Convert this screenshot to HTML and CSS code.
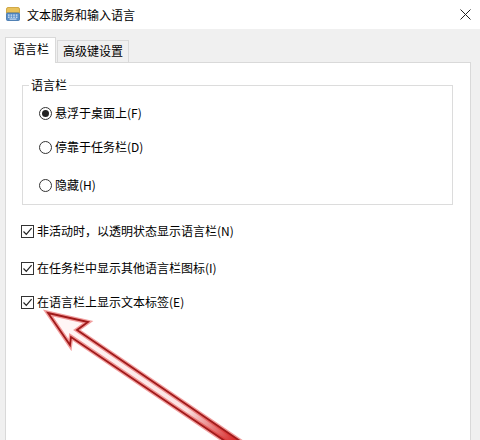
FILE: index.html
```html
<!DOCTYPE html>
<html lang="zh-CN">
<head>
<meta charset="utf-8">
<title>文本服务和输入语言</title>
<link rel="stylesheet" href="styles.css">
</head>
<body>
<div class="window">
  <div class="titlebar">
    <svg class="app-icon" width="14" height="16" viewBox="0 0 14 16">
      <path d="M2 1.5 h10 a1.5 1.5 0 0 1 1.5 1.5 v4 h-13 v-4 a1.5 1.5 0 0 1 1.5 -1.5z" fill="#e8c15a" stroke="#c89a2e" stroke-width="0.8"/>
      <rect x="0.5" y="7" width="13" height="7.5" rx="1" fill="#5a8fc8" stroke="#3a6ea8" stroke-width="0.8"/>
      <g fill="#dfeaf7">
        <rect x="2" y="8.5" width="1.6" height="1.2"/><rect x="4.6" y="8.5" width="1.6" height="1.2"/><rect x="7.2" y="8.5" width="1.6" height="1.2"/><rect x="9.8" y="8.5" width="1.6" height="1.2"/>
        <rect x="2" y="10.6" width="1.6" height="1.2"/><rect x="4.6" y="10.6" width="1.6" height="1.2"/><rect x="7.2" y="10.6" width="1.6" height="1.2"/><rect x="9.8" y="10.6" width="1.6" height="1.2"/>
        <rect x="3.5" y="12.6" width="7" height="1"/>
      </g>
    </svg>
    <span class="title">文本服务和输入语言</span>
    <svg class="close" width="11" height="11" viewBox="0 0 11 11">
      <path d="M0.5 0.5 L10.5 10.5 M10.5 0.5 L0.5 10.5" stroke="#222" stroke-width="1"/>
    </svg>
  </div>
  <div class="client">
    <div class="tabs">
      <div class="tab tab-active">语言栏</div>
      <div class="tab">高级键设置</div>
    </div>
    <div class="panel">
      <fieldset class="group">
        <legend class="group-title">语言栏</legend>
        <div class="opt opt-1"><span class="radio radio-on"></span><span class="label">悬浮于桌面上(F)</span></div>
        <div class="opt opt-2"><span class="radio"></span><span class="label">停靠于任务栏(D)</span></div>
        <div class="opt opt-3"><span class="radio"></span><span class="label">隐藏(H)</span></div>
      </fieldset>
      <div class="check check-1"><span class="box"><svg width="11" height="11" viewBox="0 0 11 11"><path d="M1.5 5.5 L4.3 8.3 L9.6 2.2" fill="none" stroke="#222" stroke-width="1.2"/></svg></span><span class="label">非活动时，以透明状态显示语言栏(N)</span></div>
      <div class="check check-2"><span class="box"><svg width="11" height="11" viewBox="0 0 11 11"><path d="M1.5 5.5 L4.3 8.3 L9.6 2.2" fill="none" stroke="#222" stroke-width="1.2"/></svg></span><span class="label">在任务栏中显示其他语言栏图标(I)</span></div>
      <div class="check check-3"><span class="box"><svg width="11" height="11" viewBox="0 0 11 11"><path d="M1.5 5.5 L4.3 8.3 L9.6 2.2" fill="none" stroke="#222" stroke-width="1.2"/></svg></span><span class="label">在语言栏上显示文本标签(E)</span></div>
    </div>
  </div>
  <svg class="arrow" width="480" height="440" viewBox="0 0 480 440">
    <defs>
      <linearGradient id="shaftfill" gradientUnits="userSpaceOnUse" x1="70" y1="330" x2="240" y2="440">
        <stop offset="0" stop-color="#fff6f6"/>
        <stop offset="0.7" stop-color="#fbe3e3"/>
        <stop offset="1" stop-color="#d42020"/>
      </linearGradient>
    </defs>
    <polygon points="48,313 88,322 77,330 268,460 256,462 71,337 70,345" fill="url(#shaftfill)" stroke="rgba(225,40,40,0.45)" stroke-width="4.5" stroke-linejoin="miter"/>
    <polygon points="48,313 88,322 77,330 268,460 256,462 71,337 70,345" fill="none" stroke="#a01a1a" stroke-width="1.8" stroke-linejoin="miter"/>
  </svg>
</div>
</body>
</html>
```

FILE: styles.css
```css
* { box-sizing: border-box; }
html, body { margin: 0; padding: 0; }
body {
  width: 480px;
  height: 440px;
  overflow: hidden;
  font-family: "Noto Sans CJK SC", "Noto Sans", sans-serif;
  font-size: 12px;
  color: #000;
  background: #f0f0f0;
}
.window {
  position: relative;
  width: 480px;
  height: 440px;
  overflow: hidden;
}
.titlebar {
  height: 29px;
  background: #fff;
  display: flex;
  align-items: center;
  padding-left: 6px;
}
.app-icon { flex: none; margin-top: -1px; }
.title {
  margin-left: 7px;
  line-height: 16px;
  font-size: 12px;
}
.close { margin-left: auto; margin-right: 9px; }
.client {
  background: #f0f0f0;
  padding-top: 8px;
  height: 411px;
}
.tabs {
  display: flex;
  align-items: flex-end;
  margin-left: 5px;
  position: relative;
  z-index: 1;
}
.tab {
  height: 22px;
  padding: 0 5px;
  line-height: 20px;
  border: 1px solid #d9d9d9;
  border-bottom: none;
  background: #f0f0f0;
  margin-left: 1px;
}
.tab-active {
  height: 26px;
  margin-left: 0;
  margin-bottom: -1px;
  background: #fff;
  padding: 0 6px 0 7px;
  line-height: 22px;
}
.panel {
  margin-left: 5px;
  width: 466px;
  height: 400px;
  background: #fff;
  border: 1px solid #d9d9d9;
  padding: 0 0 0 15px;
}
.group {
  margin: 12px 0 0 1px;
  width: 431px;
  border: 1px solid #dcdcdc;
  padding: 8px 0 9px 16px;
}
.group-title {
  padding: 0 2px;
  margin-left: -10px;
  line-height: 20px;
  height: 20px;
}
.opt {
  display: flex;
  align-items: center;
  height: 20px;
}
.opt-2 { margin-top: 14px; }
.opt-3 { margin-top: 18px; }
.radio {
  width: 13px;
  height: 13px;
  border: 1px solid #333;
  border-radius: 50%;
  display: flex;
  align-items: center;
  justify-content: center;
  margin-right: 3px;
  flex: none;
}
.radio-on::after {
  content: "";
  width: 7px;
  height: 7px;
  border-radius: 50%;
  background: #222;
}
.label { line-height: 20px; white-space: nowrap; }
.check {
  display: flex;
  align-items: center;
  height: 20px;
}
.check-1 { margin-top: 16px; }
.check-2 { margin-top: 17px; }
.check-3 { margin-top: 14px; }
.box {
  width: 13px;
  height: 13px;
  border: 1px solid #333;
  display: flex;
  align-items: center;
  justify-content: center;
  margin-right: 3px;
  flex: none;
}
.box svg { display: block; }
.arrow {
  position: absolute;
  left: 0;
  top: 0;
  pointer-events: none;
}
```
